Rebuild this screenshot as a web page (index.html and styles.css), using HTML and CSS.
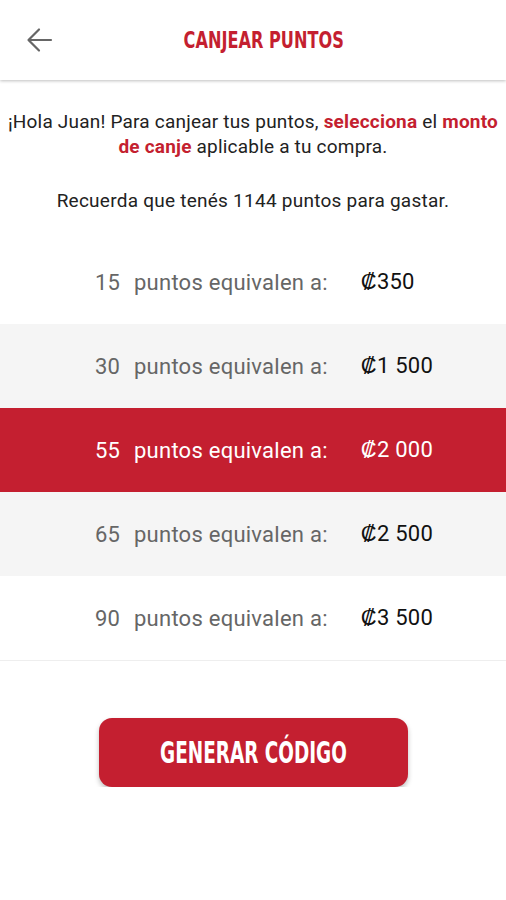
FILE: index.html
```html
<!DOCTYPE html>
<html lang="es">
<head>
  <meta charset="UTF-8" />
  <meta name="viewport" content="width=device-width, initial-scale=1" />
  <title>Canjear puntos</title>
  <link rel="stylesheet" href="styles.css">
</head>
<body>
  <header class="topbar">
    <button class="back-button" aria-label="Volver">
      <svg width="28" height="28" viewBox="0 0 28 28" fill="none" stroke="#666" stroke-width="2.2" stroke-linecap="round" stroke-linejoin="round">
        <path d="M25 14H3M13 3.5L2.5 14L13 24.5"/>
      </svg>
    </button>
    <h1><span class="condensed">CANJEAR PUNTOS</span></h1>
  </header>

  <p class="intro">
    ¡Hola Juan! Para canjear tus puntos, <b>selecciona</b> el <b>monto</b> <b>de canje</b> aplicable a tu compra.
  </p>
  <p class="reminder">Recuerda que tenés 1144 puntos para gastar.</p>

  <ul class="options">
    <li class="option">
      <span class="points">15</span>
      <span class="label">puntos equivalen a:</span>
      <span class="amount">₡350</span>
    </li>
    <li class="option alt">
      <span class="points">30</span>
      <span class="label">puntos equivalen a:</span>
      <span class="amount">₡1 500</span>
    </li>
    <li class="option selected">
      <span class="points">55</span>
      <span class="label">puntos equivalen a:</span>
      <span class="amount">₡2 000</span>
    </li>
    <li class="option alt">
      <span class="points">65</span>
      <span class="label">puntos equivalen a:</span>
      <span class="amount">₡2 500</span>
    </li>
    <li class="option">
      <span class="points">90</span>
      <span class="label">puntos equivalen a:</span>
      <span class="amount">₡3 500</span>
    </li>
  </ul>

  <div class="actions">
    <button class="generate"><span class="condensed">GENERAR CÓDIGO</span></button>
  </div>
</body>
</html>
```

FILE: styles.css
```css
body {
  font-family: Roboto, 'Liberation Sans', sans-serif;
  background: #fff;
  margin: 0;
  color: #222;
}
.condensed {
  display: inline-block;
  font-family: 'DejaVu Sans Condensed', 'Liberation Sans', sans-serif;
  font-weight: bold;
  white-space: nowrap;
}
.topbar {
  height: 80px;
  display: flex;
  align-items: center;
  justify-content: center;
  position: relative;
  box-shadow: 0 1px 3px rgba(0,0,0,0.25);
}
.back-button {
  position: absolute;
  left: 26px;
  top: 26px;
  background: none;
  border: none;
  padding: 0;
  width: 28px;
  height: 28px;
  cursor: pointer;
}
.topbar h1 {
  margin: 0 0 0 22px;
  font-size: 23px;
  line-height: 30px;
  color: #c41f30;
}
.topbar h1 .condensed {
  transform: scaleX(0.78);
}
.intro {
  margin: 29px 0 0;
  padding: 0 4px;
  text-align: center;
  font-size: 19px;
  line-height: 25px;
  letter-spacing: 0.2px;
}
.intro b {
  color: #c41f30;
  font-weight: bold;
}
.reminder {
  margin: 29px 0 0;
  text-align: center;
  font-size: 19px;
  line-height: 25px;
  letter-spacing: 0.25px;
}
.options {
  list-style: none;
  margin: 27px 0 0;
  padding: 0;
  border-bottom: 1px solid #eee;
}
.option {
  height: 84px;
  display: flex;
  align-items: center;
  padding-left: 95px;
  font-size: 22px;
  letter-spacing: 0.25px;
  color: #666;
  white-space: nowrap;
}
.option.alt {
  background: #f5f5f5;
}
.option.selected {
  background: #c41f30;
  color: #fff;
}
.points {
  width: 25px;
}
.label {
  margin-left: 14px;
}
.amount {
  margin-left: 33px;
  color: #111;
}
.selected .amount {
  color: #fff;
}
.actions {
  display: flex;
  justify-content: center;
  margin-top: 57px;
}
.generate {
  width: 309px;
  height: 69px;
  margin-left: 1px;
  background: #c41f30;
  color: #fff;
  border: none;
  border-radius: 13px;
  box-shadow: 0 3px 5px rgba(0,0,0,0.25);
  font-size: 31px;
  cursor: pointer;
}
.generate .condensed {
  transform: scaleX(0.66);
}
```
